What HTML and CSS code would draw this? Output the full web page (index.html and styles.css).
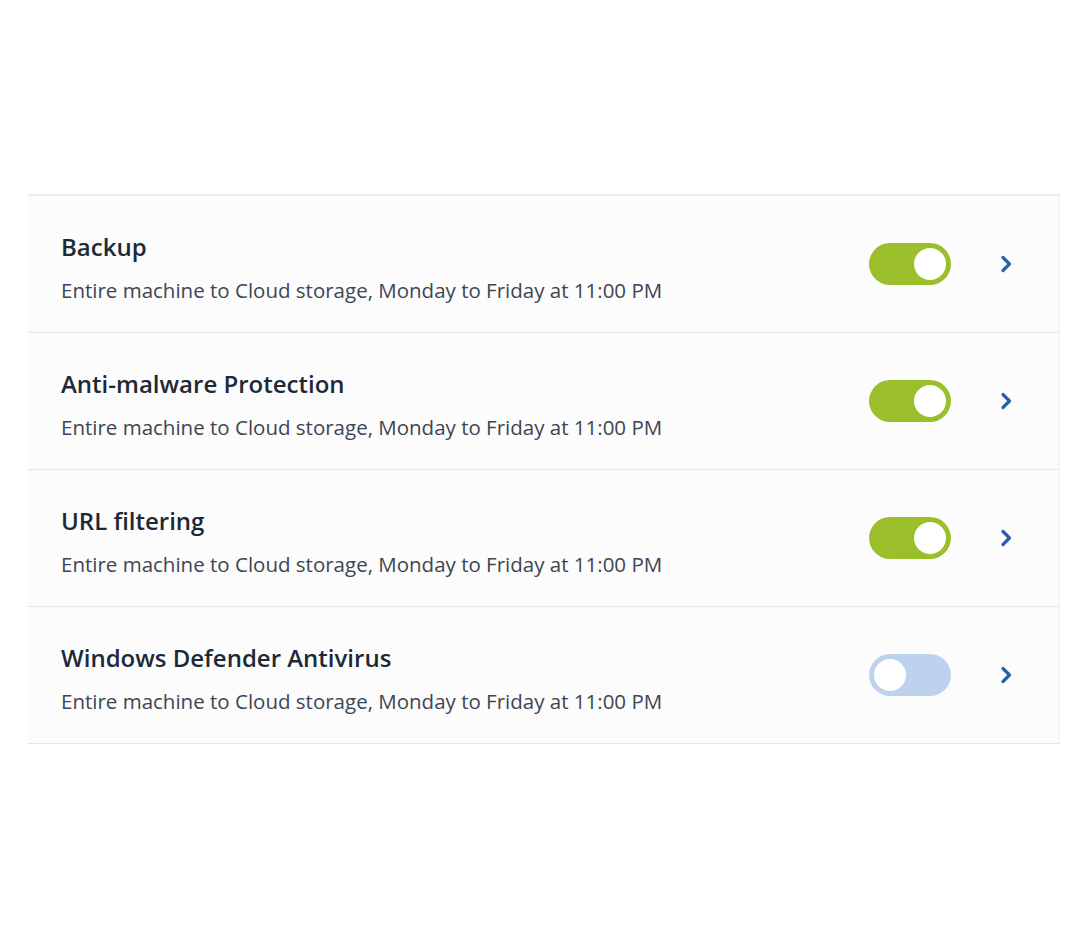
FILE: index.html
```html
<!DOCTYPE html>
<html lang="en">
<head>
    <meta charset="UTF-8">
    <meta name="viewport" content="width=device-width, initial-scale=1.0">
    <title>Protection Plan</title>
    <link rel="stylesheet" href="styles.css">
</head>
<body>
    <div class="plan-list">
        <!-- Backup -->
        <div class="plan-row">
            <div class="plan-text">
                <div class="plan-title">Backup</div>
                <div class="plan-desc">Entire machine to Cloud storage, Monday to Friday at 11:00 PM</div>
            </div>
            <div class="toggle on"><span class="knob"></span></div>
            <svg class="chevron" width="12" height="18" viewBox="0 0 12 18"><path d="M3 2.5 L9.5 9 L3 15.5" fill="none" stroke="#2a5ea8" stroke-width="3.2" stroke-linecap="round" stroke-linejoin="round"/></svg>
        </div>
        <!-- Anti-malware -->
        <div class="plan-row">
            <div class="plan-text">
                <div class="plan-title">Anti-malware Protection</div>
                <div class="plan-desc">Entire machine to Cloud storage, Monday to Friday at 11:00 PM</div>
            </div>
            <div class="toggle on"><span class="knob"></span></div>
            <svg class="chevron" width="12" height="18" viewBox="0 0 12 18"><path d="M3 2.5 L9.5 9 L3 15.5" fill="none" stroke="#2a5ea8" stroke-width="3.2" stroke-linecap="round" stroke-linejoin="round"/></svg>
        </div>
        <!-- URL filtering -->
        <div class="plan-row">
            <div class="plan-text">
                <div class="plan-title">URL filtering</div>
                <div class="plan-desc">Entire machine to Cloud storage, Monday to Friday at 11:00 PM</div>
            </div>
            <div class="toggle on"><span class="knob"></span></div>
            <svg class="chevron" width="12" height="18" viewBox="0 0 12 18"><path d="M3 2.5 L9.5 9 L3 15.5" fill="none" stroke="#2a5ea8" stroke-width="3.2" stroke-linecap="round" stroke-linejoin="round"/></svg>
        </div>
        <!-- Windows Defender -->
        <div class="plan-row">
            <div class="plan-text">
                <div class="plan-title">Windows Defender Antivirus</div>
                <div class="plan-desc">Entire machine to Cloud storage, Monday to Friday at 11:00 PM</div>
            </div>
            <div class="toggle off"><span class="knob"></span></div>
            <svg class="chevron" width="12" height="18" viewBox="0 0 12 18"><path d="M3 2.5 L9.5 9 L3 15.5" fill="none" stroke="#2a5ea8" stroke-width="3.2" stroke-linecap="round" stroke-linejoin="round"/></svg>
        </div>
    </div>
</body>
</html>
```

FILE: styles.css
```css
body {
    font-family: 'Open Sans', 'Noto Sans', sans-serif;
    margin: 0;
    padding: 194px 20px 0 28px;
    background: #fff;
}

.plan-list {
    border-top: 2px solid #e6ecf2;
    border-right: 1px solid #eef1f5;
    background: #fcfcfd;
}

.plan-row {
    display: flex;
    align-items: center;
    height: 136px;
    border-bottom: 1px solid #e4e8ed;
    padding: 0 47px 0 33px;
}

.plan-text {
    flex: 1;
    padding-top: 8px;
}

.plan-title {
    font-size: 24px;
    font-weight: 600;
    line-height: 30px;
    color: #1e2937;
}

.plan-desc {
    margin-top: 13px;
    font-size: 20.5px;
    line-height: 30px;
    color: #3d4652;
}

.toggle {
    display: flex;
    align-items: center;
    width: 82px;
    height: 42px;
    border-radius: 21px;
    padding: 0 5px;
    box-sizing: border-box;
}

.toggle.on {
    background: #9bbf2b;
    justify-content: flex-end;
}

.toggle.off {
    background: #bdd2ec;
    justify-content: flex-start;
}

.knob {
    width: 32px;
    height: 32px;
    border-radius: 50%;
    background: #fff;
}

.chevron {
    margin-left: 49px;
}
```
